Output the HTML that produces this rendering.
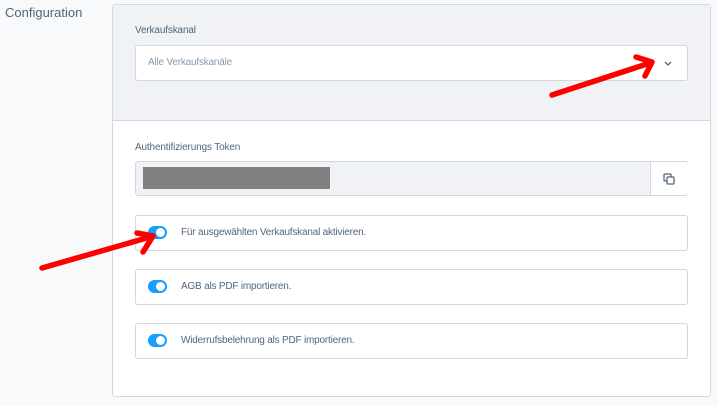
<!DOCTYPE html>
<html><head><style>
body{margin:0;width:717px;height:406px;background:#f8f9fb;font-family:"Liberation Sans",sans-serif;position:relative;overflow:hidden}
.a{position:absolute}
.lbl{font-size:10px;color:#52667a;letter-spacing:-0.15px}
.box{border:1px solid #d1d9e0;border-radius:3px;box-sizing:border-box}
.tg{position:absolute;left:12px;top:10px;width:19px;height:13px;border-radius:7px;background:#189eff}
.tg:after{content:"";position:absolute;right:2px;top:2px;width:9px;height:9px;border-radius:50%;background:#fff}
.row{position:absolute;left:135px;width:553px;height:36px;background:#fff}
.row span{position:absolute;left:45px;top:11px;font-size:10px;letter-spacing:-0.2px;color:#52667a}
</style></head><body>
<div class="a" style="left:5px;top:5px;font-size:13px;color:#52667a">Configuration</div>
<div class="a box" style="left:112px;top:4px;width:599px;height:393px;background:#fff"></div>
<div class="a" style="left:113px;top:5px;width:597px;height:115px;background:#f0f2f5;border-bottom:1px solid #d1d9e0"></div>
<div class="a lbl" style="left:135px;top:25px">Verkaufskanal</div>
<div class="a box" style="left:135px;top:45px;width:553px;height:36px;background:#fff"><span class="a" style="left:12px;top:11px;font-size:10px;letter-spacing:-0.2px;color:#8b9bab">Alle Verkaufskanäle</span>
<svg class="a" style="left:527px;top:14px" width="10" height="8"><path d="M2 2l3 3 3-3" stroke="#52667a" stroke-width="1.3" fill="none"/></svg></div>
<div class="a lbl" style="left:135px;top:142px">Authentifizierungs Token</div>
<div class="a box" style="left:135px;top:161px;width:553px;height:35px;background:#f0f2f5"></div>
<div class="a" style="left:143px;top:167px;width:187px;height:22px;background:#808080"></div>
<div class="a" style="left:650px;top:162px;width:37px;height:33px;border-left:1px solid #d1d9e0;background:#fff;border-radius:0 3px 3px 0">
<svg class="a" style="left:12px;top:11px" width="13" height="13"><rect x="1" y="1" width="7" height="7" rx="1" fill="none" stroke="#52667a" stroke-width="1.3"/><rect x="4" y="4" width="7" height="7" rx="1" fill="#fff" stroke="#52667a" stroke-width="1.3"/></svg></div>
<div class="row box" style="top:215px"><div class="tg"></div><span>Für ausgewählten Verkaufskanal aktivieren.</span></div>
<div class="row box" style="top:269px"><div class="tg"></div><span>AGB als PDF importieren.</span></div>
<div class="row box" style="top:323px"><div class="tg"></div><span>Widerrufsbelehrung als PDF importieren.</span></div>
<svg class="a" style="left:0;top:0" width="717" height="406">
<g stroke="#f00" stroke-width="5.5" stroke-linecap="round" stroke-linejoin="round" fill="none">
<path d="M552 95L650 63"/><path d="M636 57L652 62L645 76"/>
<path d="M42 268L150 237"/><path d="M137 233L153 236L143 252"/>
</g></svg>
</body></html>
